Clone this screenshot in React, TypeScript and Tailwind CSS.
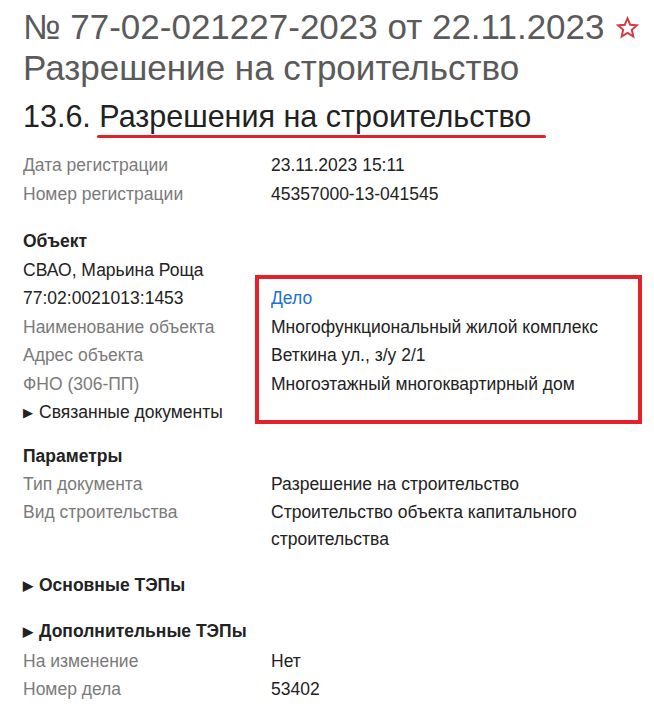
import React from "react";

const Row = ({ label, value, dark }: { label: string; value: React.ReactNode; dark?: boolean }) => (
  <div className="flex leading-[28.5px]">
    <div className={`w-[248px] shrink-0 ${dark ? "text-[#222]" : "text-[#7a7a7a]"}`}>{label}</div>
    <div className="text-[#222]">{value}</div>
  </div>
);

const Tri = () => <span className="inline-block text-[13px] mr-[6px] align-[1px]">▶</span>;

export default function App() {
  return (
    <div className="bg-white w-[654px] h-[706px] overflow-hidden pl-[23px] pt-[6px] text-[17.5px]" style={{ fontFamily: '"Liberation Sans", Arial, sans-serif' }}>
      <div className="text-[35px] leading-[42px] text-[#5a5a5a] flex items-center">
        <span>№ 77-02-021227-2023 от 22.11.2023</span>
        <svg className="ml-[11px]" width="23" height="23" viewBox="0 0 24 24" fill="none" stroke="#d9363e" strokeWidth="2" strokeLinejoin="miter">
          <path d="M12 2.5l2.8 6.6 7.1.6-5.4 4.7 1.6 7-6.1-3.7-6.1 3.7 1.6-7L2.1 9.7l7.1-.6z" />
        </svg>
      </div>
      <div className="text-[35px] leading-[40px] text-[#5a5a5a]">Разрешение на строительство</div>
      <div className="text-[30.5px] leading-[40px] text-[#222] mt-[8px]">
        13.6. <span className="relative">Разрешения на строительство
          <span className="absolute left-[-2px] right-[-15px] bottom-[-5px] h-[3.5px] rounded-full bg-[#e4202a]" />
        </span>
      </div>
      <div className="mt-[15px]">
        <Row label="Дата регистрации" value="23.11.2023 15:11" />
        <Row label="Номер регистрации" value="45357000-13-041545" />
      </div>
      <div className="mt-[19px] relative">
        <div className="font-bold text-[#222] leading-[28.5px]">Объект</div>
        <div className="text-[#222] leading-[28.5px]">СВАО, Марьина Роща</div>
        <Row dark label="77:02:0021013:1453" value={<span className="text-[#1a6fd8]">Дело</span>} />
        <Row label="Наименование объекта" value="Многофункциональный жилой комплекс" />
        <Row label="Адрес объекта" value="Веткина ул., з/у 2/1" />
        <Row label="ФНО (306-ПП)" value="Многоэтажный многоквартирный дом" />
        <div className="text-[#222] leading-[28.5px]"><Tri />Связанные документы</div>
        <div className="absolute left-[232px] top-[48px] w-[387px] h-[149px] border-[4px] border-[#e4202a]" />
      </div>
      <div className="mt-[14px]">
        <div className="font-bold text-[#222] leading-[28.5px]">Параметры</div>
        <Row label="Тип документа" value="Разрешение на строительство" />
        <div className="flex leading-[27.5px]">
          <div className="w-[248px] shrink-0 text-[#7a7a7a]">Вид строительства</div>
          <div className="text-[#222] w-[340px]">Строительство объекта капитального строительства</div>
        </div>
      </div>
      <div className="mt-[17px] font-bold text-[#222] leading-[28.5px]"><Tri />Основные ТЭПы</div>
      <div className="mt-[17px] font-bold text-[#222] leading-[28.5px]"><Tri />Дополнительные ТЭПы</div>
      <Row label="На изменение" value="Нет" />
      <Row label="Номер дела" value="53402" />
    </div>
  );
}
